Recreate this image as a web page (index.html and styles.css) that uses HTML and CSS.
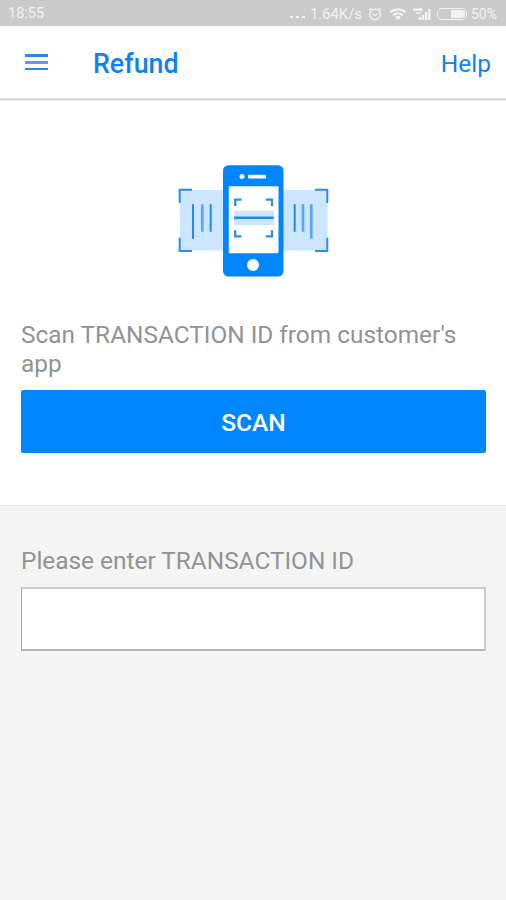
FILE: index.html
```html
<!DOCTYPE html>
<html lang="en">
<head>
    <meta charset="UTF-8">
    <meta name="viewport" content="width=device-width, initial-scale=1.0">
    <title>Refund</title>
    <link rel="stylesheet" href="styles.css">
</head>
<body>
    <div class="status-bar">
        <span class="status-time">18:55</span>
        <span class="status-dots"><i></i><i></i><i></i></span>
        <span class="status-speed">1.64K/s</span>
        <svg class="icon-alarm" width="14" height="14" viewBox="0 0 14 14" fill="none" stroke="#f2f2f2" stroke-width="1.3">
            <circle cx="7" cy="7.5" r="5.3"/>
            <path d="M4.5 6.5 7 8.7l2.7-2.2M1 3l2.4-2M13 3l-2.4-2"/>
        </svg>
        <svg class="icon-wifi" width="18" height="14" viewBox="0 0 18 14" fill="none" stroke="#f2f2f2" stroke-width="2.2">
            <path d="M1.4 5.2a11.5 11.5 0 0 1 15.2 0M4 8.3a7.4 7.4 0 0 1 10 0"/>
            <path d="M9 13 6 10.1a4.6 4.6 0 0 1 6 0z" fill="#f2f2f2" stroke="none"/>
        </svg>
        <svg class="icon-signal" width="18" height="14" viewBox="0 0 18 14" fill="#f2f2f2">
            <path d="M0 1.5h7V0L10 2.6 7 5V3.7H0zM3 5.3h5v1.4H3z"/>
            <path d="M5.5 10H8v3H5.500zM8.700 8h2.400v5H8.700zM11.900 5h2.400v8h-2.400zM15.100 2h2.400v11h-2.400z"/>
        </svg>
        <span class="battery"><span class="battery-level"></span></span>
        <span class="status-percent">50%</span>
    </div>

    <header class="app-bar">
        <button class="menu-button" aria-label="Menu">
            <span></span>
            <span></span>
            <span></span>
        </button>
        <h1>Refund</h1>
        <a href="#" class="help-link">Help</a>
    </header>

    <section class="scan">
        <svg class="scan-image" width="151" height="112" viewBox="0 0 151 112" fill="none">
            <!-- barcode behind the phone -->
            <path d="M2 25h147.5v60.5H2z" fill="#cce6ff"/>
            <path d="M1.7 38V24.7H14M137 24.7h12.3V38M1.7 72.7v13.2H14M137 85.9h12.3V72.7" stroke="#2b8cec" stroke-width="2"/>
            <path d="M15 39.3v34.4M32.7 39.3v27.4M116.7 39.3v27.4" stroke="#2487ea" stroke-width="2"/>
            <path d="M24.3 39.3v27.4M125 39.3v27.4M133.3 39.3v34.4" stroke="#5ba5f1" stroke-width="2.7"/>
            <!-- phone -->
            <rect x="45" y="0.2" width="60.5" height="111.3" rx="5.5" fill="#0086ff"/>
            <rect x="50.8" y="21.3" width="49.7" height="67" rx="1" fill="#fff"/>
            <circle cx="64" cy="11.6" r="2.5" fill="#fff"/>
            <rect x="70" y="9.8" width="18" height="3.6" rx="0.8" fill="#fff"/>
            <circle cx="75" cy="100" r="6" fill="#fff"/>
            <path d="M56 45.7h39.7V60H56z" fill="#cce6ff"/>
            <path d="M56 52.7h39.7" stroke="#2487ea" stroke-width="2.4"/>
            <path d="M57.2 41v-6.3h6.3M87.7 34.7H94V41M57.2 65.2v6.1h6.3M87.7 71.3H94v-6.1" stroke="#2b8cec" stroke-width="2.3"/>
        </svg>
        <p class="label">Scan TRANSACTION ID from customer's app</p>
        <button class="scan-button">SCAN</button>
    </section>

    <section class="manual">
        <label class="label" for="transaction-id">Please enter TRANSACTION ID</label>
        <input type="text" id="transaction-id" class="transaction-input">
    </section>
</body>
</html>
```
FILE: styles.css
```css
* {
    box-sizing: border-box;
}
body {
    margin: 0;
    min-height: 900px;
    display: flex;
    flex-direction: column;
    font-family: Roboto, "Liberation Sans", sans-serif;
    background-color: #ffffff;
    color: #929292;
}
button {
    font-family: inherit;
    border: 0;
    padding: 0;
}

/* Status bar */
.status-bar {
    display: flex;
    align-items: center;
    height: 26px;
    padding: 1px 7px 0 8px;
    background-color: #cacaca;
    color: #f2f2f2;
    font-size: 14.8px;
    line-height: 26px;
}
.status-time {
    width: 36px;
    margin: 1px auto 0 0;
    font-size: 14.5px;
}
.status-dots {
    display: flex;
    gap: 3px;
    margin: 7px 5px 0 0;
}
.status-dots i {
    width: 3px;
    height: 2px;
    background-color: #f2f2f2;
}
.status-speed {
    width: 51px;
    white-space: nowrap;
}
.icon-alarm {
    margin-left: 7px;
}
.icon-wifi {
    margin-left: 7px;
}
.icon-signal {
    margin-left: 6px;
}
.battery {
    display: flex;
    justify-content: flex-end;
    width: 30px;
    height: 12px;
    margin-left: 6px;
    padding: 1px;
    border: 1px solid #f2f2f2;
    border-radius: 5px;
}
.battery-level {
    width: 14px;
    border-radius: 0 4px 4px 0;
    background-color: #f2f2f2;
}
.status-percent {
    width: 28px;
    margin-left: 4px;
    font-size: 14px;
}

/* App bar */
.app-bar {
    display: flex;
    align-items: center;
    height: 73px;
    padding: 0 15px 0 25px;
    border-bottom: 1px solid #dcdcdc;
    box-shadow: 0 1px 0 #d3d3d3, 0 2px 0 #eeeeee;
    color: #0f80f5;
}
.menu-button {
    display: flex;
    flex-direction: column;
    gap: 4px;
    width: 23px;
    background: none;
}
.menu-button span {
    height: 2.5px;
    background-color: #2b86ea;
}
.menu-button span:nth-child(2) {
    height: 3px;
    background-color: #5c9ff2;
}
.app-bar h1 {
    margin: 3px auto 0 45px;
    font-size: 26.8px;
    font-weight: 500;
}
.help-link {
    margin-top: 3px;
    color: inherit;
    font-size: 24.5px;
    text-decoration: none;
}

/* Scan */
.scan {
    display: flex;
    flex-direction: column;
    height: 406px;
    padding: 66px 20px 0 21px;
}
.scan-image {
    align-self: center;
}
.label {
    font-size: 24.4px;
    line-height: 29px;
}
.scan .label {
    margin: 43px 0 12px;
}
.scan-button {
    height: 63px;
    padding-top: 1px;
    border-radius: 2px;
    background-color: #0086ff;
    color: #ffffff;
    font-size: 24.5px;
    font-weight: 500;
}

/* Manual entry */
.manual {
    display: flex;
    flex: 1;
    flex-direction: column;
    padding: 40px 20px 0 21px;
    border-top: 1px solid #eaeaea;
    background-color: #f4f4f4;
}
.transaction-input {
    height: 64px;
    margin-top: 12px;
    padding: 0 12px;
    border: 1px solid #b0b0b0;
    border-width: 2px 2px 2px 1px;
    border-color: #cccccc #cccccc #b4b4b4 #a8a8a8;
    font: inherit;
    font-size: 24px;
}
```
